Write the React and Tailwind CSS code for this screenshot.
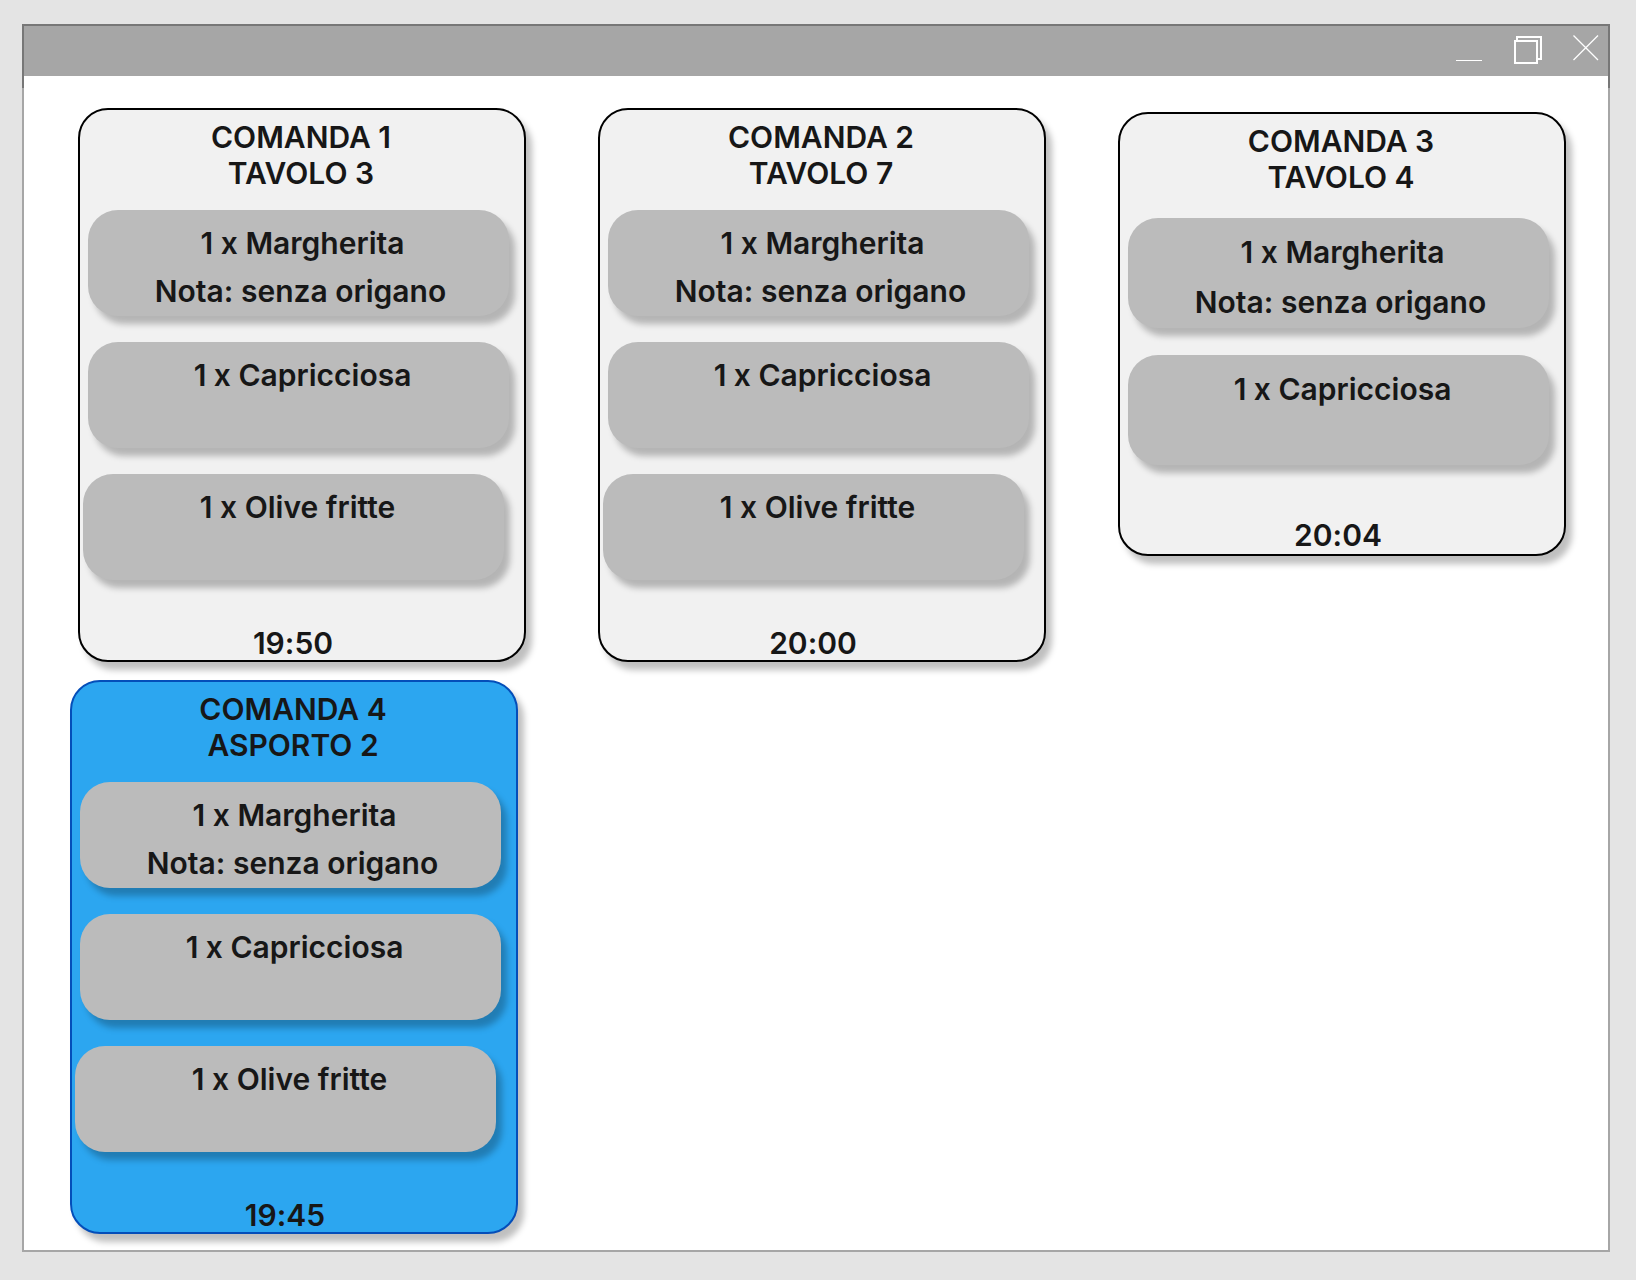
import React from "react";

const threeItems = [
  { name: "1 x Margherita", note: "Nota: senza origano" },
  { name: "1 x Capricciosa" },
  { name: "1 x Olive fritte", last: true },
];

const twoItems = threeItems.slice(0, 2);

const dineIn = [
  { title: "COMANDA 1", place: "TAVOLO 3", items: threeItems, time: "19:50" },
  { title: "COMANDA 2", place: "TAVOLO 7", items: threeItems, time: "20:00" },
  { title: "COMANDA 3", place: "TAVOLO 4", items: twoItems, time: "20:04", short: true },
];

const takeAway = [
  { title: "COMANDA 4", place: "ASPORTO 2", items: threeItems, time: "19:45", blue: true },
];

function OrderCard({ order }) {
  const { title, place, items, time, short, blue } = order;
  return (
    <article
      className={`rounded-[30px] border-2 pt-[9px] shadow-[6px_8px_6px_rgba(0,0,0,0.25)] ${
        blue ? "border-[#044eb9] bg-[#2ca6f0]" : "border-black bg-[#f1f1f1]"
      } ${short ? "mt-1 pb-[3px]" : "pb-px"}`}
    >
      <h2 className="pr-0.5 text-center leading-9">
        {title}
        <br />
        {place}
      </h2>
      <ul className={`flex flex-col pr-[15px] pl-2 ${short ? "mt-[23px] gap-[27px]" : "mt-[19px] gap-[26px]"}`}>
        {items.map((item) => (
          <li
            key={item.name}
            className={`rounded-[30px] bg-[#bbbbbb] pt-[9px] pl-1 text-center shadow-[6px_8px_6px_rgba(0,0,0,0.25)] ${
              short ? "min-h-[110px] leading-[50px]" : "min-h-[106px] leading-[48px]"
            } ${item.last ? "mr-[5px] -ml-[5px]" : ""}`}
          >
            <p className="pl-1">{item.name}</p>
            {item.note && <p>{item.note}</p>}
          </li>
        ))}
      </ul>
      <p className={`text-center leading-8 ${short ? "mt-[54px] pr-2" : "mt-[47px] pr-[18px]"}`}>
        <time>{time}</time>
      </p>
    </article>
  );
}

function TitleBar() {
  return (
    <header className="flex h-[50px] items-start justify-end gap-[31px] bg-[#a6a6a6] pt-[9px] pr-[9px]">
      <button type="button" aria-label="Minimise">
        <svg width="27" height="28" viewBox="0 0 27 28" fill="none" stroke="white">
          <path d="M0 25.5H26" />
        </svg>
      </button>
      <button type="button" aria-label="Restore">
        <svg width="28" height="30" viewBox="0 0 28 30" fill="none" stroke="white" strokeWidth="2">
          <path d="M3 5V2H27V24H24" />
          <rect x="1" y="6" width="22" height="22" />
        </svg>
      </button>
      <button type="button" aria-label="Close">
        <svg width="26" height="26" viewBox="0 0 26 26" fill="none" stroke="white" strokeWidth="1.3">
          <path d="M0.5 0.5L25 25M25 0.5L0.5 25" />
        </svg>
      </button>
    </header>
  );
}

export default function App() {
  return (
    <div className="min-h-screen bg-[#e4e4e4] pt-6 pr-[26px] pb-7 pl-[22px] font-['Inter',sans-serif] text-[30px] font-semibold text-[#171717] [font-variant-ligatures:none]">
      <div className="relative border-2 border-[#a6a6a6] bg-white">
        <TitleBar />
        <span
          aria-hidden="true"
          className="pointer-events-none absolute -inset-x-0.5 -top-0.5 h-16 border-2 border-b-0 border-[#777777]"
        />
        <main className="pt-8 pb-4">
          <section className="grid grid-cols-3 items-start gap-[72px] pr-[42px] pl-[54px]">
            {dineIn.map((order) => (
              <OrderCard key={order.title} order={order} />
            ))}
          </section>
          <section className="mt-[18px] grid grid-cols-3 items-start gap-[72px] pr-[50px] pl-[46px]">
            {takeAway.map((order) => (
              <OrderCard key={order.title} order={order} />
            ))}
          </section>
        </main>
      </div>
    </div>
  );
}
